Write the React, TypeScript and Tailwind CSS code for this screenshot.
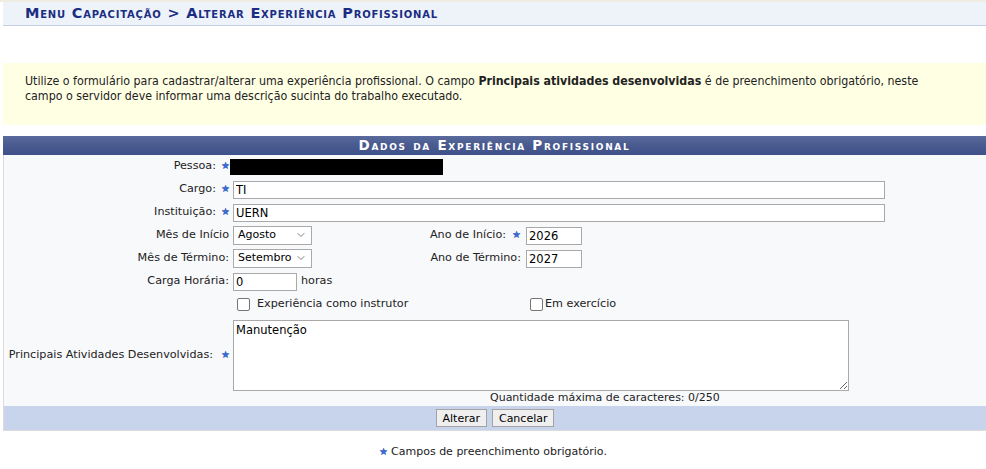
import React from 'react';
import { ChevronDown } from 'lucide-react';

const Star: React.FC = () => (
  <span className="text-[10px] leading-none text-[#3d6bd6]" style={{ textShadow: '0 0 0.5px #1c3b8a' }}>
    ★
  </span>
);

const Row: React.FC<{ label: string; star?: boolean; children?: React.ReactNode; className?: string }> = ({
  label,
  star,
  children,
  className = 'h-[23px]',
}) => (
  <div className={`flex items-center ${className}`}>
    <div className={`w-[229px] flex items-center justify-end ${star ? 'pr-[3px]' : 'pr-[4px]'}`}>
      <span>{label}</span>
      {star && (
        <span className="ml-[5px] w-[9px] flex justify-center">
          <Star />
        </span>
      )}
    </div>
    <div className="flex items-center">{children}</div>
  </div>
);

const SelectBox: React.FC<{ value: string }> = ({ value }) => (
  <div className="relative w-[79px] h-[19px]">
    <select
      defaultValue={value}
      className="appearance-none w-full h-full border border-[#a9a9a9] bg-white pl-[4px] text-[11px] text-black outline-none"
    >
      <option>{value}</option>
    </select>
    <ChevronDown size={12} strokeWidth={1.5} className="absolute right-[5px] top-[3px] text-[#555] pointer-events-none" />
  </div>
);

const inputCls = 'h-[18px] border border-[#a9a9a9] bg-white px-[2px] text-[11.5px] text-black outline-none';

const App: React.FC = () => {
  return (
    <div className="w-[986px] bg-white text-[11.2px] text-[#222]" style={{ fontFamily: '"DejaVu Sans", Verdana, sans-serif' }}>
      <div className="h-[2px] bg-[#eeece3]" />
      <div className="ml-[3px] h-[24px] bg-[#eef3fa] border-b border-[#c5d0e6] flex items-center pl-[22px]">
        <span className="font-bold text-[14.5px] text-[#1b2d82] tracking-[0.8px]" style={{ fontVariant: 'small-caps' }}>
          Menu Capacitação &gt; Alterar Experiência Profissional
        </span>
      </div>

      <div
        className="ml-[3px] mt-[37px] h-[62px] bg-[#ffffe4] pl-[22px] pt-[11px] text-[12.3px] leading-[15px] text-[#222]"
        style={{ fontFamily: '"DejaVu Sans Condensed", Tahoma, "Liberation Sans", sans-serif' }}
      >
        Utilize o formulário para cadastrar/alterar uma experiência profissional. O campo{' '}
        <b>Principais atividades desenvolvidas</b> é de preenchimento obrigatório, neste
        <br />
        campo o servidor deve informar uma descrição sucinta do trabalho executado.
      </div>

      <div className="ml-[3px] mt-[11px]">
        <div
          className="h-[19px] flex items-center justify-center text-white font-bold text-[13.5px] tracking-[1.7px]"
          style={{ fontVariant: 'small-caps', background: 'linear-gradient(#5a6a9d, #485a8e 50%, #3f518a)' }}
        >
          Dados da Experiência Profissional
        </div>
        <div className="bg-[#f8f9fb] border-l border-[#dcdcdc]">
          <Row label="Pessoa:" star>
            <div className="ml-[-3px] w-[213px] h-[16px] bg-black" />
          </Row>
          <Row label="Cargo:" star>
            <input defaultValue="TI" className={`w-[652px] ${inputCls}`} />
          </Row>
          <Row label="Instituição:" star>
            <input defaultValue="UERN" className={`w-[652px] ${inputCls}`} />
          </Row>
          <Row label="Mês de Início">
            <div className="w-[170px]">
              <SelectBox value="Agosto" />
            </div>
            <div className="w-[123px] flex items-center justify-end">
              <span>Ano de Início:</span>
              <span className="ml-[6px] mr-[5px]"><Star /></span>
            </div>
            <input defaultValue="2026" className={`w-[56px] ${inputCls}`} />
          </Row>
          <Row label="Mês de Término:">
            <div className="w-[170px]">
              <SelectBox value="Setembro" />
            </div>
            <div className="w-[123px] flex items-center justify-end pr-[5px]">
              <span>Ano de Término:</span>
            </div>
            <input defaultValue="2027" className={`w-[56px] ${inputCls}`} />
          </Row>
          <Row label="Carga Horária:">
            <input defaultValue="0" className={`w-[64px] ${inputCls}`} />
            <span className="ml-[4px]">horas</span>
          </Row>
          <Row label="">
            <div className="w-[297px] flex items-center pl-[4px]">
              <span className="w-[13px] h-[13px] border border-[#767676] rounded-[2px] bg-white" />
              <span className="ml-[7px]">Experiência como instrutor</span>
            </div>
            <span className="w-[13px] h-[13px] border border-[#767676] rounded-[2px] bg-white" />
            <span className="ml-[2px]">Em exercício</span>
          </Row>
          <div className="flex items-center h-[75px] pt-[4px]">
            <div className="w-[229px] flex items-center justify-end pr-[3px]">
              <span className="mr-[8px]">Principais Atividades Desenvolvidas:</span>
              <span className="w-[9px] flex justify-center"><Star /></span>
            </div>
            <textarea
              defaultValue="Manutenção"
              className="w-[616px] h-[71px] border border-[#a9a9a9] bg-white px-[2px] py-[1px] text-[11.5px] text-black outline-none resize"
            />
          </div>
          <div className="h-[15px] flex items-center pl-[486px] text-[11px] text-[#222]">
            Quantidade máxima de caracteres: 0/250
          </div>
        </div>
        <div className="h-[25px] bg-[#c8d4ec] border-b border-l border-[#dcdcdc] flex items-center justify-center gap-[5px]">
          <button className="h-[18px] px-[6px] bg-[#efefef] border border-[#a3a3a3] text-[11px] text-black leading-none">
            Alterar
          </button>
          <button className="h-[18px] px-[6px] bg-[#efefef] border border-[#a3a3a3] text-[11px] text-black leading-none">
            Cancelar
          </button>
        </div>
      </div>

      <div className="mt-[13px] flex items-center justify-center gap-[3px] text-[11px] text-[#222]">
        <Star />
        <span>Campos de preenchimento obrigatório.</span>
      </div>
    </div>
  );
};

export default App;
